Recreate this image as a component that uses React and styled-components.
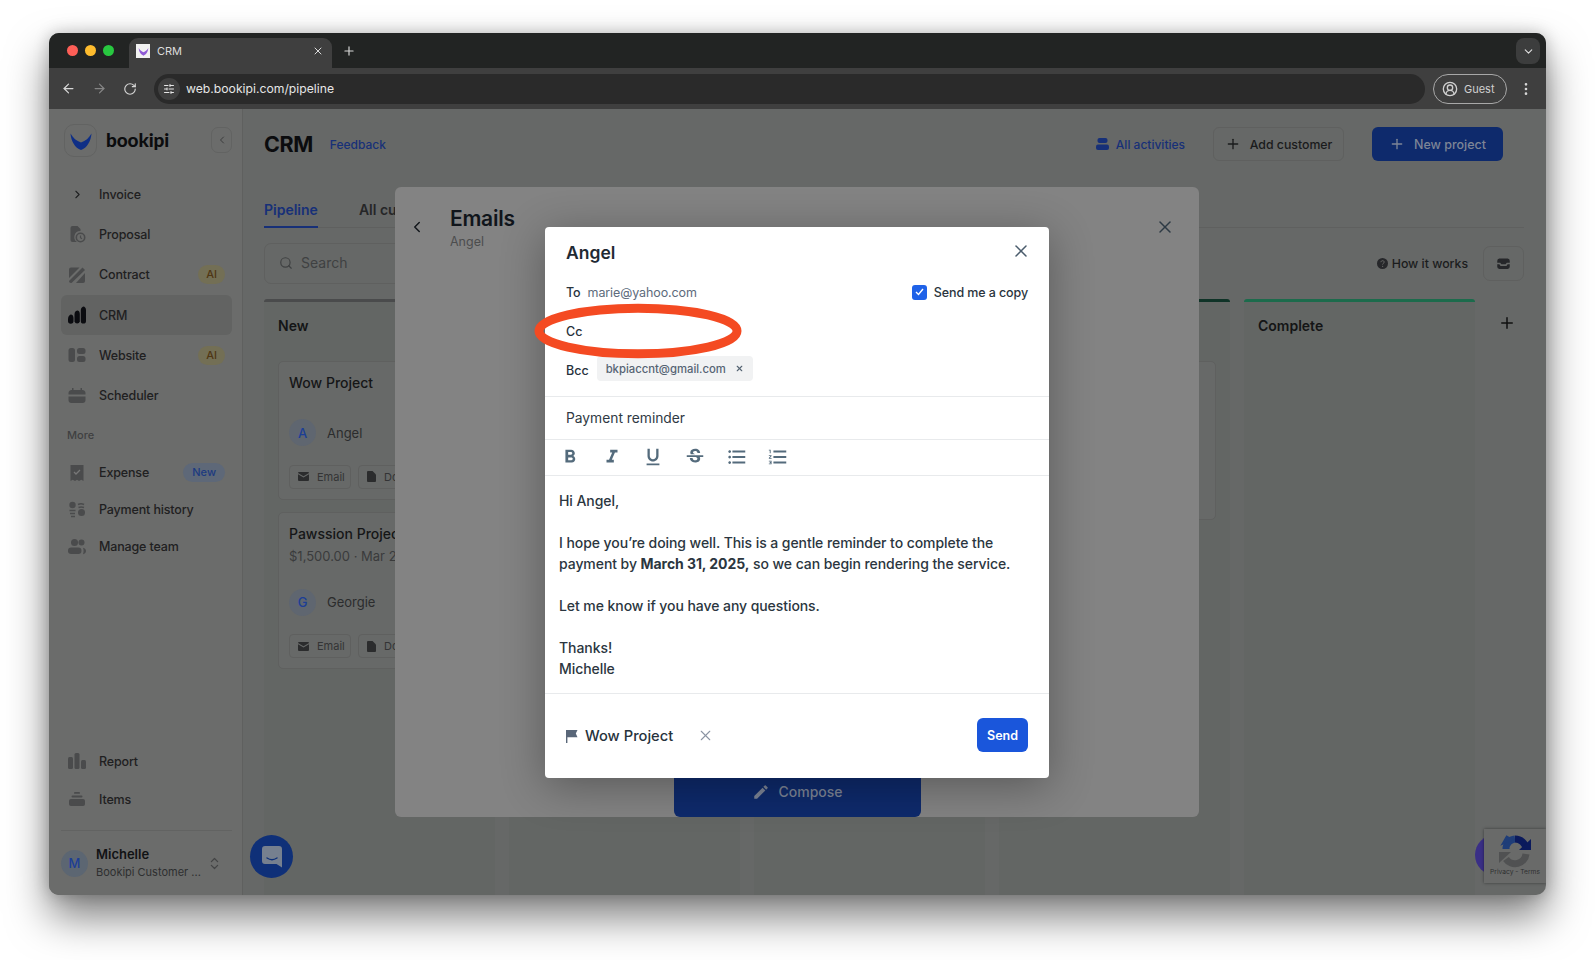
import React from "react";
import styled, { createGlobalStyle } from "styled-components";
import {
  ArrowLeft,
  ArrowRight,
  RotateCw,
  X,
  Plus,
  ChevronDown,
  ChevronLeft,
  ChevronRight,
  ChevronsUpDown,
  Search,
  CircleUserRound,
  SlidersHorizontal,
  EllipsisVertical,
} from "lucide-react";
import {
  MdFormatBold,
  MdFormatItalic,
  MdFormatUnderlined,
  MdStrikethroughS,
  MdFormatListBulleted,
  MdFormatListNumbered,
  MdEdit,
} from "react-icons/md";

const GlobalStyle = createGlobalStyle`
  html, body { margin: 0; background: #fff; }
  body { font-family: Inter, "Liberation Sans", sans-serif; -webkit-font-smoothing: antialiased; }
  * { box-sizing: border-box; }
`;

const Desktop = styled.div`
  width: 1595px;
  height: 960px;
  padding: 33px 49px 65px;
  overflow: hidden;
`;
const Win = styled.div`
  width: 1497px;
  height: 862px;
  border-radius: 10px;
  overflow: hidden;
  display: flex;
  flex-direction: column;
  background: #666867;
  box-shadow: 0 22px 42px rgba(0, 0, 0, 0.5), 0 0 16px rgba(0, 0, 0, 0.22);
`;

/* browser chrome */
const TabStrip = styled.div`
  height: 35px;
  flex: none;
  background: #222423;
  display: flex;
  align-items: flex-end;
  padding-left: 18px;
`;
const Lights = styled.div`
  display: flex;
  gap: 7px;
  margin-right: 15px;
  align-self: center;
`;
const Light = styled.span`
  width: 11px;
  height: 11px;
  border-radius: 50%;
  background: ${p => p.$c};
`;
const Tab = styled.div`
  width: 203px;
  height: 30px;
  background: #3f3f3f;
  border-radius: 9px 9px 0 0;
  display: flex;
  align-items: center;
  padding: 0 8px 4px 7px;
  color: #dcdcdc;
  font-size: 11px;
  svg { flex: none; }
`;
const Favicon = styled.span`
  width: 14px;
  height: 14px;
  background: #f2f2f2;
  margin-right: 7px;
  display: flex;
  align-items: center;
  justify-content: center;
`;
const TabLabel = styled.span`
  flex: 1;
`;
const NewTab = styled.div`
  color: #d8d8d8;
  margin-left: 10px;
  height: 30px;
  padding-bottom: 4px;
  display: flex;
  align-items: center;
`;
const TabMenu = styled.div`
  width: 24px;
  height: 26px;
  margin: 0 6px 4px auto;
  border-radius: 8px;
  background: #3c3d3d;
  color: #e0e0e0;
  display: flex;
  align-items: center;
  justify-content: center;
`;
const Toolbar = styled.div`
  height: 41px;
  flex: none;
  background: #3f3f3f;
  display: flex;
  align-items: center;
  padding: 0 12px 0 3.5px;
`;
const NavArrow = styled.div`
  width: 31px;
  display: flex;
  justify-content: center;
  color: ${p => (p.$off ? "#858585" : "#d6d6d6")};
`;
const AddressBar = styled.div`
  flex: 1;
  height: 30px;
  margin-left: 8px;
  border-radius: 15px;
  background: #2a2a2a;
  display: flex;
  align-items: center;
  padding-left: 4px;
  color: #e6e6e6;
  font-size: 12.2px;
`;
const SiteIcon = styled.span`
  width: 22px;
  height: 22px;
  border-radius: 50%;
  background: #3f3f3f;
  margin-right: 6.5px;
  display: flex;
  align-items: center;
  justify-content: center;
`;
const GuestPill = styled.div`
  width: 74px;
  height: 30px;
  margin-left: 8px;
  border: 1px solid #a8a8a8;
  border-radius: 15px;
  display: flex;
  align-items: center;
  gap: 6px;
  padding-left: 8px;
  color: #d0d0d0;
  font-size: 11px;
`;
const MenuDots = styled.div`
  margin-left: 11px;
  color: #d8d8d8;
  display: flex;
`;

/* app behind the dialogs */
const AppBody = styled.div`
  flex: 1;
  min-height: 0;
  position: relative;
  display: flex;
`;
const Sidebar = styled.aside`
  width: 194px;
  flex: none;
  background: #6b6c6b;
  border-right: 1px solid #5f605f;
  display: flex;
  flex-direction: column;
  padding: 15px 10px 0 12px;
`;
const Brand = styled.div`
  display: flex;
  align-items: center;
  margin: 0 -1px 17px 3px;
  height: 33px;
`;
const LogoTile = styled.div`
  width: 33px;
  height: 33px;
  border: 1px solid #626362;
  border-radius: 10px;
  display: flex;
  align-items: center;
  justify-content: center;
`;
const BrandName = styled.span`
  font-family: Lato, sans-serif;
  font-weight: 900;
  font-size: 19px;
  color: #0b0c0e;
  margin: -2px 0 0 9px;
  letter-spacing: -0.1px;
`;
const Collapse = styled.div`
  width: 21px;
  height: 26px;
  margin: -1px 1px 0 auto;
  border: 1px solid #626362;
  border-radius: 7px;
  color: #3b3c3d;
  display: flex;
  align-items: center;
  justify-content: center;
`;
const NavItem = styled.div`
  height: ${p => p.$h || 40.3}px;
  flex: none;
  display: flex;
  align-items: center;
  gap: 13px;
  padding: 0 7px 0 7px;
  border-radius: 6px;
  font-size: 12.5px;
  font-weight: 500;
  letter-spacing: -0.15px;
  color: #1f2021;
  background: ${p => (p.$active ? "#626362" : "transparent")};
  svg { flex: none; }
`;
const NavIconSlot = styled.span`
  width: 18px;
  height: 18px;
  flex: none;
  display: flex;
  align-items: center;
  justify-content: center;
`;
const Badge = styled.span`
  margin-left: auto;
  height: 19px;
  padding: 0 ${p => (p.$new ? 9 : 8)}px;
  border-radius: 10px;
  font-size: 11px;
  line-height: 19px;
  letter-spacing: 0;
  background: ${p => (p.$new ? "#5e6878" : "#736f55")};
  color: ${p => (p.$new ? "#1c3a80" : "#4f3613")};
`;
const SectionLabel = styled.div`
  height: 38.5px;
  flex: none;
  display: flex;
  align-items: center;
  padding: 0 0 1px 6px;
  font-size: 11px;
  font-weight: 500;
  color: #3f4041;
`;
const BottomNav = styled.div`
  margin-top: auto;
`;
const UserRow = styled.div`
  margin-top: 12px;
  border-top: 1px solid #626362;
  height: 65px;
  display: flex;
  align-items: center;
  gap: 8px;
`;
const Avatar = styled.span`
  width: 27px;
  height: 27px;
  flex: none;
  border-radius: 50%;
  background: ${p => (p.$dark ? "#5c6672" : "#5f6670")};
  color: #1c3e96;
  font-size: 13px;
  font-weight: 500;
  display: flex;
  align-items: center;
  justify-content: center;
`;
const UserText = styled.div`
  flex: 1;
  min-width: 0;
`;
const UserName = styled.div`
  font-size: 13px;
  font-weight: 600;
  line-height: 18px;
  margin-top: -1px;
  color: #111214;
`;
const UserRole = styled.div`
  font-size: 11px;
  line-height: 18px;
  color: #2e2f30;
  white-space: nowrap;
`;
const UserSwitch = styled.span`
  color: #434445;
  display: flex;
  margin-right: 10px;
`;

const Main = styled.main`
  flex: 1;
  min-width: 0;
  padding: 18px 22px 0 21px;
  overflow: hidden;
`;
const HeaderRow = styled.div`
  height: 34px;
  padding-right: 21px;
  display: flex;
  align-items: center;
`;
const PageTitle = styled.h1`
  margin: 0;
  font-size: 21.5px;
  font-weight: 700;
  letter-spacing: -0.4px;
  color: #0b0c0e;
`;
const Feedback = styled.a`
  margin-left: 17px;
  font-size: 12px;
  font-weight: 500;
  color: #173078;
`;
const Activities = styled.a`
  margin-left: auto;
  margin-right: 28px;
  display: flex;
  align-items: center;
  gap: 7px;
  font-size: 12px;
  font-weight: 500;
  color: #173078;
`;
const GhostButton = styled.div`
  height: 34px;
  width: 131px;
  border: 1px solid #5f605f;
  border-radius: 6px;
  display: flex;
  align-items: center;
  justify-content: center;
  gap: 9px;
  font-size: 12.3px;
  font-weight: 500;
  color: #1a1b1c;
`;
const PrimaryButton = styled.div`
  height: 34px;
  width: 131px;
  margin-left: 28px;
  border-radius: 6px;
  background: #0e2a6c;
  display: flex;
  align-items: center;
  justify-content: center;
  gap: 9px;
  font-size: 12.5px;
  font-weight: 500;
  color: #7d8596;
`;
const TabsRow = styled.div`
  margin-top: 32px;
  height: 35px;
  display: flex;
  gap: 41px;
  border-bottom: 1px solid #5f605f;
`;
const PageTab = styled.div`
  height: 35px;
  padding-top: 8px;
  font-size: 14px;
  font-weight: 600;
  color: ${p => (p.$active ? "#173078" : "#252627")};
  border-bottom: ${p => (p.$active ? "2px solid #173078" : "none")};
`;
const ControlsRow = styled.div`
  margin-top: 15px;
  height: 41px;
  display: flex;
  align-items: center;
`;
const SearchBox = styled.div`
  width: 300px;
  height: 41px;
  border: 1px solid #5f605f;
  border-radius: 7px;
  display: flex;
  align-items: center;
  gap: 8px;
  padding: 0 0 2px 14px;
  font-size: 14px;
  color: #3f4142;
`;
const HowItWorks = styled.div`
  margin-left: auto;
  margin-right: 15px;
  display: flex;
  align-items: center;
  gap: 4px;
  font-size: 12.3px;
  font-weight: 500;
  color: #1b1c1d;
`;
const SquareButton = styled.div`
  width: 41px;
  height: 35px;
  border: 1px solid #5f605f;
  border-radius: 7px;
  display: flex;
  align-items: center;
  justify-content: center;
`;
const Board = styled.div`
  margin-top: 15px;
  display: flex;
  gap: 14px;
`;
const Column = styled.section`
  width: 231px;
  flex: none;
  height: 620px;
  background: #636664;
  border-top: 3px solid ${p => p.$bar};
  border-radius: 3px 3px 0 0;
  padding: 0 14px;
`;
const ColumnTitle = styled.div`
  height: 59px;
  padding-top: 15px;
  font-size: 14px;
  font-weight: 600;
  color: #141516;
`;
const AddColumn = styled.div`
  margin: 15px 0 0 8.5px;
  color: #111;
`;
const Card = styled.article`
  height: ${p => p.$h}px;
  margin-bottom: 12px;
  border: 1px solid #5f605f;
  border-radius: 5px;
  padding: 10px 10px;
  background: #676968;
`;
const CardTitle = styled.div`
  font-size: 14px;
  font-weight: 500;
  line-height: 22px;
  color: #151617;
  white-space: nowrap;
`;
const CardMeta = styled.div`
  font-size: 13px;
  line-height: 22px;
  color: #3a3b3c;
  white-space: nowrap;
`;
const Customer = styled.div`
  display: flex;
  align-items: center;
  gap: 11px;
  margin-top: ${p => p.$gap}px;
  font-size: 13px;
  color: #2b2c2d;
`;
const CardActions = styled.div`
  display: flex;
  gap: 7px;
  margin-top: 18.5px;
`;
const ActionChip = styled.div`
  width: 62px;
  height: 24px;
  flex: none;
  border: 1px solid #5f605f;
  border-radius: 4px;
  display: flex;
  align-items: center;
  gap: 8px;
  padding-left: 8px;
  font-size: 11px;
  color: #333435;
`;
const ChatBubble = styled.div`
  position: absolute;
  left: 201px;
  bottom: 17px;
  width: 43px;
  height: 43px;
  border-radius: 50%;
  background: #0f3078;
  display: flex;
  align-items: center;
  justify-content: center;
`;
const PurpleDot = styled.div`
  position: absolute;
  right: 31px;
  bottom: 20px;
  width: 40px;
  height: 40px;
  border-radius: 50%;
  background: #3a2f86;
`;
const Recaptcha = styled.div`
  position: absolute;
  right: 0;
  bottom: 12px;
  width: 62px;
  height: 54px;
  background: #696a69;
  box-shadow: 0 0 3px rgba(0, 0, 0, 0.45);
  display: flex;
  flex-direction: column;
  align-items: center;
  padding-top: 5px;
  font-size: 6.7px;
  color: #2f3031;
  white-space: nowrap;
`;

/* emails panel */
const EmailsPanel = styled.div`
  position: absolute;
  left: 346px;
  top: 78px;
  width: 804px;
  height: 630px;
  border-radius: 6px;
  background: #838383;
  display: flex;
  align-items: flex-start;
  padding: 19px 24px 0 13px;
`;
const PanelBack = styled.div`
  margin: 12px 24px 0 0;
  color: #14181d;
  display: flex;
`;
const PanelTitle = styled.h2`
  margin: 0;
  font-size: 21px;
  font-weight: 600;
  line-height: 26px;
  letter-spacing: -0.25px;
  color: #10151b;
`;
const PanelSub = styled.div`
  font-size: 12.5px;
  line-height: 19px;
  color: #4c4d4e;
`;
const PanelClose = styled.div`
  margin: 11px 0 0 auto;
  color: #2d3a45;
  display: flex;
`;
const Compose = styled.div`
  position: absolute;
  left: 279px;
  bottom: 0;
  width: 247px;
  height: 60px;
  padding-top: 26px;
  border-radius: 0 0 6px 6px;
  background: #0e2a6c;
  display: flex;
  align-items: flex-start;
  justify-content: center;
  gap: 8px;
  font-size: 14px;
  font-weight: 500;
  color: #7d8596;
`;

/* compose dialog */
const Dialog = styled.div`
  position: absolute;
  left: 496px;
  top: 118px;
  width: 504px;
  height: 551px;
  border-radius: 4px;
  background: #fff;
  box-shadow: 0 8px 44px rgba(0, 0, 0, 0.32);
  color: #27323c;
`;
const DialogHead = styled.div`
  height: 50px;
  padding: 0 21px;
  display: flex;
  align-items: center;
  justify-content: space-between;
`;
const DialogName = styled.h3`
  margin: 0;
  font-size: 17.5px;
  font-weight: 600;
  color: #1f2a33;
`;
const DialogClose = styled.div`
  color: #4a5c6c;
  display: flex;
  margin: -2px -3px 0 0;
`;
const ToRow = styled.div`
  height: 30px;
  padding: 0 21px;
  display: flex;
  align-items: center;
  font-size: 12.5px;
  font-weight: 500;
  letter-spacing: -0.1px;
  color: #2a343d;
`;
const ToAddress = styled.span`
  margin-left: 7px;
  color: #5d6b7c;
  font-weight: 400;
`;
const CopyCheck = styled.label`
  margin-left: auto;
  display: flex;
  align-items: center;
  gap: 7px;
`;
const CheckBox = styled.span`
  width: 15px;
  height: 15px;
  border-radius: 3px;
  background: #1f62e8;
  color: #fff;
  display: flex;
  align-items: center;
  justify-content: center;
`;
const CcRow = styled.div`
  height: 48px;
  padding: 0 21px;
  display: flex;
  align-items: center;
  font-size: 12.5px;
  font-weight: 500;
`;
const BccRow = styled.div`
  margin-top: 2px;
  padding: 0 21px 15px;
  height: 40px;
  display: flex;
  align-items: flex-start;
  gap: 8px;
  font-size: 12.5px;
  font-weight: 500;
  border-bottom: 1px solid #e8eaec;
`;
const BccLabel = styled.span`
  line-height: 28px;
`;
const Chip = styled.span`
  height: 25px;
  margin-top: -1px;
  padding: 0 9px;
  width: 156px;
  border-radius: 4px;
  background: #f1f2f3;
  display: flex;
  align-items: center;
  justify-content: space-between;
  font-size: 11.3px;
  color: #566473;
`;
const Subject = styled.div`
  height: 43px;
  padding: 0 21px;
  display: flex;
  align-items: center;
  font-size: 13.8px;
  color: #2f3a44;
  border-bottom: 1px solid #e8eaec;
`;
const FormatBar = styled.div`
  height: 36px;
  padding: 0 0 1px 14px;
  display: flex;
  align-items: center;
  gap: 19.7px;
  color: #546b7c;
  border-bottom: 1px solid #e8eaec;
`;
const Message = styled.div`
  padding: 13.5px 14px 14.5px;
  font-size: 14px;
  font-weight: 450;
  line-height: 21px;
  letter-spacing: -0.07px;
  color: #2b3640;
  border-bottom: 1px solid #e8eaec;
  p { margin: 0 0 21px; }
  p:last-child { margin: 0; }
  b { font-weight: 700; }
`;
const DialogFoot = styled.div`
  height: 82px;
  padding: 0 21px;
  display: flex;
  align-items: center;
`;
const ProjectTag = styled.span`
  display: flex;
  align-items: center;
  gap: 7px;
  padding-top: 2px;
  font-size: 14.7px;
  font-weight: 500;
  color: #27323c;
`;
const TagRemove = styled.span`
  margin: 1px 0 0 24px;
  color: #8b94a3;
  display: flex;
`;
const SendButton = styled.div`
  margin-left: auto;
  width: 51px;
  height: 34px;
  border-radius: 6px;
  background: #1a56db;
  display: flex;
  align-items: center;
  justify-content: center;
  font-size: 12.5px;
  font-weight: 600;
  color: #fff;
`;
const Annotation = styled.svg`
  position: absolute;
  left: -12px;
  top: 76px;
  pointer-events: none;
`;

/* drawn icons */
const Shape = ({ children, size = 18, fill = "#4a4b4c" }) => (
  <svg width={size} height={size} viewBox="0 0 18 18" fill={fill}>{children}</svg>
);
const ProposalIcon = () => (
  <Shape>
    <path d="M2.500 3a2 2 0 0 1 2-2h5l3 3v2a6 6 0 0 0-3.500 11h-4.500a2 2 0 0 1-2-2z" />
    <circle cx="12.500" cy="12.500" r="4.200" fill="none" stroke="#4a4b4c" strokeWidth="1.600" />
    <path d="M12.500 10.500v2.300l1.500 1" fill="none" stroke="#4a4b4c" strokeWidth="1.200" />
  </Shape>
);
const ContractIcon = () => (
  <Shape>
    <path d="M1 3.500a2 2 0 0 1 2-2h8.500L1 12z" />
    <path d="M1 15 14.500 1.500l2.500 2.500L3.500 17H3a2 2 0 0 1-2-2z" />
    <path d="M17 7v8a2 2 0 0 1-2 2H8z" />
  </Shape>
);
const CrmIcon = () => (
  <Shape fill="#0b0c10">
    <path d="M0 13c0-3 2-4.500 3-4.500S5.500 9.500 5.500 12v3a2.700 2.700 0 0 1-5.500 0z" />
    <path d="M6.500 8c0-2.500 2-3.500 3-3.500S11.800 5.500 11.800 8v7.200a2.700 2.700 0 0 1-5.300 0z" />
    <path d="M12.800 4c0-2 2-3.500 2.800-3.500S18 2 18 4v11a2.600 2.600 0 0 1-5.200 0z" />
  </Shape>
);
const WebsiteIcon = () => (
  <Shape>
    <rect x="0.500" y="2" width="6.500" height="14" rx="2.500" />
    <rect x="9" y="2" width="8.500" height="6" rx="2.500" />
    <rect x="9" y="10" width="8.500" height="6" rx="2.500" />
  </Shape>
);
const SchedulerIcon = () => (
  <Shape>
    <path d="M4 1h1.500v2h7V1H14v2a3 3 0 0 1 3.500 3v1.500H.5V6A3 3 0 0 1 4 3z" />
    <path d="M.5 9.500h17V13a3 3 0 0 1-3 3h-11a3 3 0 0 1-3-3z" />
  </Shape>
);
const ExpenseIcon = () => (
  <Shape>
    <path d="M2.500 1h13v16l-2.200-1.300L11 17l-2-1.300L7 17l-2.300-1.300L2.500 17z" />
    <path d="m6 8 2 2 4-4" fill="none" stroke="#777" strokeWidth="1.300" />
  </Shape>
);
const PaymentIcon = () => (
  <Shape>
    <circle cx="4.500" cy="4" r="3.200" />
    <circle cx="13.500" cy="11.500" r="3.500" />
    <path d="M1.500 9.500h6M2 12.500h5M3 15.500h4M10 3.500c2-1 4-1 6 0M10.500 6.500c2-.7 3.500-.7 5.500 0" fill="none" stroke="#4a4b4c" strokeWidth="1.600" />
  </Shape>
);
const TeamIcon = () => (
  <Shape>
    <circle cx="6.500" cy="4.500" r="3.500" />
    <circle cx="13.500" cy="4.500" r="3" />
    <rect x="0" y="9.500" width="13.500" height="6.500" rx="3.200" />
    <path d="M15 9.800c2 .4 3 1.700 3 3.200s-1 2.800-3 3.200c.8-2 .8-4.400 0-6.400z" />
  </Shape>
);
const ReportIcon = () => (
  <Shape>
    <rect x="0" y="5" width="5" height="12" rx="1.500" />
    <rect x="6.500" y="1" width="5" height="16" rx="1.500" />
    <rect x="13" y="8" width="5" height="9" rx="1.500" />
  </Shape>
);
const ItemsIcon = () => (
  <Shape>
    <rect x="6" y="2" width="6" height="1.800" rx="0.900" />
    <rect x="3.500" y="5.500" width="11" height="2" rx="1" />
    <rect x="1" y="9" width="16" height="7" rx="2" />
  </Shape>
);
const Wing = ({ size, color }) => (
  <svg width={size} height={size} viewBox="0 0 24 24" fill={color}>
    <path d="M1.500 4.500C4 9 7.500 12 12 13.500 16.500 12 20 9 22.500 4.500 22 12 18 19 12 21 6 19 2 12 1.500 4.500z" />
  </svg>
);
const InboxIcon = () => (
  <Shape size={15} fill="#26272a">
    <path d="M4 3h10a3 3 0 0 1 2.500 3v2H13l-1.500 2h-5L5 8H1.500V6A3 3 0 0 1 4 3z" />
    <path d="M1.500 10H4l1.500 2h7L14 10h2.500v3a2.500 2.500 0 0 1-2.500 2.500H4A2.500 2.500 0 0 1 1.500 13z" />
  </Shape>
);
const MailIcon = () => (
  <svg width="11" height="9" viewBox="0 0 11 9" fill="#2b2c2d">
    <path d="M1 0h9a1 1 0 0 1 1 1L5.500 4.200 0 1a1 1 0 0 1 1-1z" />
    <path d="M0 2.300 5.500 5.500 11 2.300V8a1 1 0 0 1-1 1H1a1 1 0 0 1-1-1z" />
  </svg>
);
const DocIcon = () => (
  <svg width="9" height="11" viewBox="0 0 9 11" fill="#2b2c2d">
    <path d="M1 0h4.500L9 3.500V10a1 1 0 0 1-1 1H1a1 1 0 0 1-1-1V1a1 1 0 0 1 1-1z" />
  </svg>
);
const PersonStack = () => (
  <svg width="13" height="12" viewBox="0 0 13 12" fill="#173078">
    <rect x="1.500" y="0" width="10" height="5" rx="2" />
    <rect x="0" y="6.500" width="13" height="5.500" rx="2" />
  </svg>
);
const HelpDot = () => (
  <svg width="11" height="11" viewBox="0 0 11 11">
    <circle cx="5.500" cy="5.500" r="5.500" fill="#26272a" />
    <path d="M3.900 4.200c.1-1 .8-1.500 1.700-1.500s1.600.6 1.600 1.400c0 1.300-1.600 1.200-1.600 2.400" fill="none" stroke="#686968" strokeWidth="1" />
    <circle cx="5.600" cy="8.300" r="0.650" fill="#686968" />
  </svg>
);
const FlagIcon = () => (
  <svg width="12" height="13" viewBox="0 0 12 13" fill="#596678">
    <path d="M0 0h11.500L9.800 3.500l1.700 3.700H1.400V13H0z" />
  </svg>
);
const ChatIcon = () => (
  <svg width="20" height="22" viewBox="0 0 20 22">
    <path d="M3 0h14a3 3 0 0 1 3 3v18.500L14.500 18H3a3 3 0 0 1-3-3V3a3 3 0 0 1 3-3z" fill="#76808f" />
    <path d="M5 12c3 2 7 2 10 0" fill="none" stroke="#0f3078" strokeWidth="1.400" strokeLinecap="round" />
  </svg>
);
const CaptchaIcon = () => (
  <svg width="34" height="34" viewBox="0 0 34 34" fill="none" strokeWidth="7">
    <path d="M8 15a10 10 0 0 1 9-10" stroke="#1f3d78" />
    <path d="M17 5a11 11 0 0 1 11 10" stroke="#0b1a5c" />
    <path d="M28 20a11 11 0 0 1-20 5" stroke="#505152" />
    <path d="M5 14V2l9 0z" fill="#1f3d78" stroke="none" transform="rotate(30 8 8)" />
    <path d="M33 5v11H21z" fill="#0b1a5c" stroke="none" />
    <path d="M1 18h12l-12 11z" fill="#505152" stroke="none" />
  </svg>
);

const mainNav = [
  { label: "Proposal", icon: <ProposalIcon /> },
  { label: "Contract", icon: <ContractIcon />, badge: "AI" },
  { label: "CRM", icon: <CrmIcon />, active: true },
  { label: "Website", icon: <WebsiteIcon />, badge: "AI" },
  { label: "Scheduler", icon: <SchedulerIcon /> },
];
const moreNav = [
  { label: "Expense", icon: <ExpenseIcon />, badge: "New" },
  { label: "Payment history", icon: <PaymentIcon /> },
  { label: "Manage team", icon: <TeamIcon /> },
];
const bottomNav = [
  { label: "Report", icon: <ReportIcon /> },
  { label: "Items", icon: <ItemsIcon /> },
];

const NavRow = ({ item, h }) => (
  <NavItem $active={item.active} $h={h}>
    <NavIconSlot>{item.icon}</NavIconSlot>
    {item.label}
    {item.badge && <Badge $new={item.badge === "New"}>{item.badge}</Badge>}
  </NavItem>
);

const ProjectCard = ({ title, meta, initial, name, h }) => (
  <Card $h={h}>
    <CardTitle>{title}</CardTitle>
    {meta && <CardMeta>{meta}</CardMeta>}
    <Customer $gap={meta ? 21.5 : 25}>
      <Avatar>{initial}</Avatar>
      {name}
    </Customer>
    <CardActions>
      <ActionChip><MailIcon />Email</ActionChip>
      <ActionChip><DocIcon />Docs</ActionChip>
    </CardActions>
  </Card>
);

export default function App() {
  return (
    <>
      <GlobalStyle />
      <Desktop>
        <Win>
          <TabStrip>
            <Lights>
              <Light $c="#fe5f57" />
              <Light $c="#febc2e" />
              <Light $c="#28c840" />
            </Lights>
            <Tab>
              <Favicon><Wing size={11} color="#8f5bd6" /></Favicon>
              <TabLabel>CRM</TabLabel>
              <X size={12} />
            </Tab>
            <NewTab><Plus size={14} /></NewTab>
            <TabMenu><ChevronDown size={13} /></TabMenu>
          </TabStrip>
          <Toolbar>
            <NavArrow><ArrowLeft size={15} /></NavArrow>
            <NavArrow $off><ArrowRight size={15} /></NavArrow>
            <NavArrow><RotateCw size={14} /></NavArrow>
            <AddressBar>
              <SiteIcon><SlidersHorizontal size={12} /></SiteIcon>
              web.bookipi.com/pipeline
            </AddressBar>
            <GuestPill><CircleUserRound size={16} />Guest</GuestPill>
            <MenuDots><EllipsisVertical size={16} /></MenuDots>
          </Toolbar>
          <AppBody>
            <Sidebar>
              <Brand>
                <LogoTile><Wing size={24} color="#0f2f86" /></LogoTile>
                <BrandName>bookipi</BrandName>
                <Collapse><ChevronLeft size={12} /></Collapse>
              </Brand>
              <NavItem>
                <NavIconSlot><ChevronRight size={13} color="#1f2021" /></NavIconSlot>
                Invoice
              </NavItem>
              {mainNav.map(item => <NavRow key={item.label} item={item} />)}
              <SectionLabel>More</SectionLabel>
              {moreNav.map(item => <NavRow key={item.label} item={item} h={37} />)}
              <BottomNav>
                {bottomNav.map(item => <NavRow key={item.label} item={item} h={38} />)}
                <UserRow>
                  <Avatar $dark>M</Avatar>
                  <UserText>
                    <UserName>Michelle</UserName>
                    <UserRole>Bookipi Customer ...</UserRole>
                  </UserText>
                  <UserSwitch><ChevronsUpDown size={15} /></UserSwitch>
                </UserRow>
              </BottomNav>
            </Sidebar>
            <Main>
              <HeaderRow>
                <PageTitle>CRM</PageTitle>
                <Feedback>Feedback</Feedback>
                <Activities><PersonStack />All activities</Activities>
                <GhostButton><Plus size={16} />Add customer</GhostButton>
                <PrimaryButton><Plus size={16} />New project</PrimaryButton>
              </HeaderRow>
              <TabsRow>
                <PageTab $active>Pipeline</PageTab>
                <PageTab>All customers</PageTab>
              </TabsRow>
              <ControlsRow>
                <SearchBox><Search size={14} />Search</SearchBox>
                <HowItWorks><HelpDot />How it works</HowItWorks>
                <SquareButton><InboxIcon /></SquareButton>
              </ControlsRow>
              <Board>
                <Column $bar="#4a4b4c">
                  <ColumnTitle>New</ColumnTitle>
                  <ProjectCard title="Wow Project" initial="A" name="Angel" h={139} />
                  <ProjectCard title="Pawssion Project" meta="$1,500.00 · Mar 29" initial="G" name="Georgie" h={157} />
                </Column>
                <Column $bar="#4a4b4c" />
                <Column $bar="#4a4b4c" />
                <Column $bar="#0f3327">
                  <ColumnTitle />
                  <Card $h={159} />
                </Column>
                <Column $bar="#1c6b4c">
                  <ColumnTitle>Complete</ColumnTitle>
                </Column>
                <AddColumn><Plus size={18} /></AddColumn>
              </Board>
            </Main>
            <ChatBubble><ChatIcon /></ChatBubble>
            <PurpleDot />
            <Recaptcha>
              <CaptchaIcon />
              Privacy - Terms
            </Recaptcha>
            <EmailsPanel>
              <PanelBack><ChevronLeft size={18} /></PanelBack>
              <div>
                <PanelTitle>Emails</PanelTitle>
                <PanelSub>Angel</PanelSub>
              </div>
              <PanelClose><X size={20} strokeWidth={1.8} /></PanelClose>
              <Compose><MdEdit size={18} />Compose</Compose>
            </EmailsPanel>
            <Dialog>
              <DialogHead>
                <DialogName>Angel</DialogName>
                <DialogClose><X size={20} strokeWidth={1.8} /></DialogClose>
              </DialogHead>
              <ToRow>
                To<ToAddress>marie@yahoo.com</ToAddress>
                <CopyCheck>
                  <CheckBox><svg width="9" height="8" viewBox="0 0 9 8" fill="none" stroke="#fff" strokeWidth="1.400"><path d="M1 4l2.500 2.500L8 1" /></svg></CheckBox>
                  Send me a copy
                </CopyCheck>
              </ToRow>
              <CcRow>Cc</CcRow>
              <BccRow>
                <BccLabel>Bcc</BccLabel>
                <Chip>bkpiaccnt@gmail.com<X size={9} strokeWidth={3} /></Chip>
              </BccRow>
              <Subject>Payment reminder</Subject>
              <FormatBar>
                <MdFormatBold size={22} />
                <MdFormatItalic size={22} />
                <MdFormatUnderlined size={22} />
                <MdStrikethroughS size={22} />
                <MdFormatListBulleted size={22} />
                <MdFormatListNumbered size={22} />
              </FormatBar>
              <Message>
                <p>Hi Angel,</p>
                <p>I hope you’re doing well. This is a gentle reminder to complete the payment by <b>March 31, 2025,</b> so we can begin rendering the service.</p>
                <p>Let me know if you have any questions.</p>
                <p>Thanks!<br />Michelle</p>
              </Message>
              <DialogFoot>
                <ProjectTag><FlagIcon />Wow Project</ProjectTag>
                <TagRemove><X size={17} strokeWidth={1.5} /></TagRemove>
                <SendButton>Send</SendButton>
              </DialogFoot>
              <Annotation width="212" height="56" viewBox="0 0 212 56">
                <ellipse cx="105" cy="28" rx="99" ry="22.800" fill="none" stroke="#f44a22" strokeWidth="9" />
              </Annotation>
            </Dialog>
          </AppBody>
        </Win>
      </Desktop>
    </>
  );
}
